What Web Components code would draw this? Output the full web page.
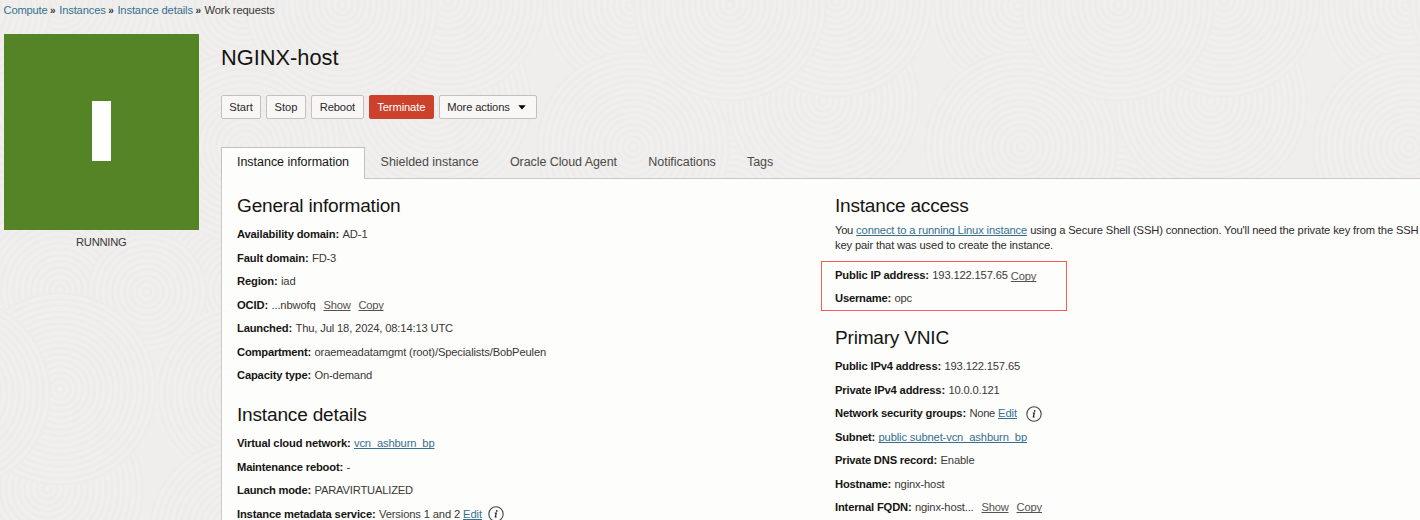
<!DOCTYPE html>
<html lang="en">
<head>
<meta charset="utf-8">
<title>NGINX-host</title>
<style>
html,body{margin:0;height:100%;overflow:hidden}
body{font-family:"Liberation Sans",Arial,sans-serif;font-size:11.2px;color:#3a3836;background:#f1efed}
</style>
</head>
<body>
<oci-page>
  <oci-breadcrumb slot="crumbs">
    <a><x-run w="44">Compute</x-run></a><a><x-run w="46.5">Instances</x-run></a><a><x-run w="75.5">Instance details</x-run></a><span><x-run w="70">Work requests</x-run></span>
  </oci-breadcrumb>
  <oci-status slot="status"><x-run w="50.5">RUNNING</x-run></oci-status>
  <oci-title slot="main"><x-run w="117.5">NGINX-host</x-run></oci-title>
  <oci-toolbar slot="main">
    <oci-button style="width:40px"><x-run w="23.5">Start</x-run></oci-button>
    <oci-button style="width:39.5px"><x-run w="23">Stop</x-run></oci-button>
    <oci-button style="width:53px"><x-run w="35">Reboot</x-run></oci-button>
    <oci-button danger style="width:64.5px"><x-run w="48">Terminate</x-run></oci-button>
    <oci-button menu style="width:98.5px"><x-run w="62.5">More actions</x-run></oci-button>
  </oci-toolbar>
  <oci-tabs slot="main">
    <oci-tab active><x-run w="112">Instance information</x-run></oci-tab>
    <oci-tab><x-run w="98">Shielded instance</x-run></oci-tab>
    <oci-tab><x-run w="107.8">Oracle Cloud Agent</x-run></oci-tab>
    <oci-tab><x-run w="67.5">Notifications</x-run></oci-tab>
    <oci-tab><x-run w="26">Tags</x-run></oci-tab>
  </oci-tabs>
  <oci-panel slot="main">
    <oci-section slot="left">
      <x-run slot="title" w="163.5">General information</x-run>
      <oci-field label="Availability domain:" lw="102"><x-run w="25">AD-1</x-run></oci-field>
      <oci-field label="Fault domain:" lw="71.5"><x-run w="24">FD-3</x-run></oci-field>
      <oci-field label="Region:" lw="40.5"><x-run w="14.5">iad</x-run></oci-field>
      <oci-field label="OCID:" lw="31"><x-run w="44">...nbwofq</x-run><oci-link muted gap><x-run w="27">Show</x-run></oci-link><oci-link muted gap><x-run w="25">Copy</x-run></oci-link></oci-field>
      <oci-field label="Launched:" lw="55"><x-run w="157.5">Thu, Jul 18, 2024, 08:14:13 UTC</x-run></oci-field>
      <oci-field label="Compartment:" lw="74"><x-run w="231.5">oraemeadatamgmt (root)/Specialists/BobPeulen</x-run></oci-field>
      <oci-field label="Capacity type:" lw="74"><x-run w="57.5">On-demand</x-run></oci-field>
    </oci-section>
    <oci-section slot="left">
      <x-run slot="title" w="129.5">Instance details</x-run>
      <oci-field label="Virtual cloud network:" lw="113.5"><oci-link><x-run w="80.5">vcn_ashburn_bp</x-run></oci-link></oci-field>
      <oci-field label="Maintenance reboot:" lw="106"><x-run w="4">-</x-run></oci-field>
      <oci-field label="Launch mode:" lw="74"><x-run w="98.5">PARAVIRTUALIZED</x-run></oci-field>
      <oci-field label="Instance metadata service:" lw="138.5"><x-run w="81">Versions 1 and 2</x-run><oci-link near><x-run w="19">Edit</x-run></oci-link><oci-info></oci-info></oci-field>
    </oci-section>
    <oci-section slot="right">
      <x-run slot="title" w="133.5">Instance access</x-run>
      <oci-note><x-run w="18">You</x-run> <oci-link><x-run w="171">connect to a running Linux instance</x-run></oci-link> <x-run w="388.5">using a Secure Shell (SSH) connection. You'll need the private key from the SSH</x-run><br><x-run w="218">key pair that was used to create the instance.</x-run></oci-note>
      <oci-highlight>
        <oci-field label="Public IP address:" lw="94"><x-run w="75.5">193.122.157.65</x-run><oci-link muted near low><x-run w="25.5">Copy</x-run></oci-link></oci-field>
        <oci-field label="Username:" lw="56"><x-run w="17.5">opc</x-run></oci-field>
      </oci-highlight>
    </oci-section>
    <oci-section slot="right">
      <x-run slot="title" w="114">Primary VNIC</x-run>
      <oci-field label="Public IPv4 address:" lw="106"><x-run w="75.5">193.122.157.65</x-run></oci-field>
      <oci-field label="Private IPv4 address:" lw="110"><x-run w="51">10.0.0.121</x-run></oci-field>
      <oci-field label="Network security groups:" lw="131"><x-run w="25.5">None</x-run><oci-link near><x-run w="19">Edit</x-run></oci-link><oci-info style="margin-left:9px"></oci-info></oci-field>
      <oci-field label="Subnet:" lw="40"><oci-link><x-run w="148.5">public subnet-vcn_ashburn_bp</x-run></oci-link></oci-field>
      <oci-field label="Private DNS record:" lw="102"><x-run w="34">Enable</x-run></oci-field>
      <oci-field label="Hostname:" lw="56"><x-run w="50">nginx-host</x-run></oci-field>
      <oci-field label="Internal FQDN:" lw="76.5"><x-run w="58.5">nginx-host...</x-run><oci-link muted gap><x-run w="27">Show</x-run></oci-link><oci-link muted gap><x-run w="25.5">Copy</x-run></oci-link></oci-field>
    </oci-section>
  </oci-panel>
</oci-page>
<script>
const define=(name,html,setup)=>{
  const t=document.createElement('template');t.innerHTML=html;
  customElements.define(name,class extends HTMLElement{
    constructor(){super();this.attachShadow({mode:'open'}).append(t.content.cloneNode(true));}
    connectedCallback(){if(setup)setup(this,this.shadowRoot);}
  });
};

define('oci-texture',`<style>:host{position:absolute;inset:0;z-index:-1}svg{display:block;width:100%;height:100%}</style><svg></svg>`,(el,root)=>{
  const P=388;
  /* centre x, centre y, radius; later discs overlap earlier ones */
  const discs=[[342,200,80],[242,290,90],[60,290,97],[147,292,60],[242,6,88],[245,147,97],[47,101,98],[60,1,97],[342,5,97]];
  let defs='',shapes='';
  discs.forEach(([x,y,r],i)=>{
    for(const dx of[-P,0,P])for(const dy of[-P,0,P]){
      const cx=x+dx,cy=y+dy;
      if(cx+r<0||cx-r>P||cy+r<0||cy-r>P)continue;
      const id='g'+i+'_'+(dx/P+1)+(dy/P+1);
      defs+=`<radialGradient id="${id}" gradientUnits="userSpaceOnUse" cx="${cx}" cy="${cy}" r="6.1" spreadMethod="repeat"><stop offset="0" stop-color="#f0efed"/><stop offset=".35" stop-color="#f0efed"/><stop offset=".7" stop-color="#ecebe9"/><stop offset="1" stop-color="#f0efed"/></radialGradient>`;
      shapes+=`<circle cx="${cx}" cy="${cy}" r="${r}" fill="url(#${id})"/>`;
    }
  });
  root.querySelector('svg').innerHTML=`<defs>${defs}<pattern id="tile" width="${P}" height="${P}" patternUnits="userSpaceOnUse"><rect width="${P}" height="${P}" fill="#efeeec"/>${shapes}</pattern></defs><rect width="100%" height="100%" fill="url(#tile)"/>`;
});

define('oci-page',`<style>
:host{display:grid;grid-template:22px 498px/221px 1fr;height:520px;overflow:hidden;position:relative;z-index:0}
header{grid-column:1/3}
main{display:flex;flex-direction:column;min-width:0;height:498px}
</style><oci-texture></oci-texture><header><slot name="crumbs"></slot></header><aside><slot name="status"></slot></aside><main><slot name="main"></slot></main>`);

define('oci-breadcrumb',`<style>
:host{display:flex;align-items:center;height:20px;padding-left:3.5px}
::slotted(a){color:#36708f}
::slotted(:not(:last-child))::after{content:"»";color:#333;font-weight:bold;font-size:10px;display:inline-block;width:11.7px;text-indent:2.5px}
</style><slot></slot>`);

define('oci-status',`<style>
:host{display:block;padding:12px 0 0 3.5px;width:195.5px;text-align:center}
div{display:grid;place-items:center;height:196px;background:#558427;margin-bottom:6px}
i{width:19px;height:60px;margin-top:-2px;background:#fff}
</style><div><i></i></div><slot></slot>`);

define('oci-title',`<style>:host{display:flex;align-items:center;height:73px;font-size:21.8px;color:#161513}::slotted(*){margin-top:-2px}</style><slot></slot>`);

define('oci-toolbar',`<style>:host{display:flex;gap:5.2px;height:24px}</style><slot></slot>`);

define('oci-button',`<style>
:host{display:flex;box-sizing:border-box;align-items:center;justify-content:center;height:24px;border:1px solid #c4c1bd;border-radius:2px;background:#f8f7f6;color:#2a2826}
:host([danger]){background:#cc412b;border-color:#cc412b;color:#fff}
svg{display:none;margin:0 3px 0 8px}
:host([menu]) svg{display:block}
</style><slot></slot><svg width="8" height="5"><path d="M.3.3h7.4L4 4.5z" fill="#000"/></svg>`);

define('oci-tabs',`<style>:host{display:flex;height:32px;margin-top:28px;position:relative;z-index:1}</style><slot></slot>`);
define('oci-tab',`<style>
:host{display:block;padding:7.5px 16px 0 15.3px;line-height:15px;font-size:12.5px;color:#4c4a48}
:host([active]){box-sizing:border-box;width:144.3px;padding:7px 15px 0;border:1px solid #c4c1bd;border-bottom:0;background:#fdfdfc;color:#161513}
</style><slot></slot>`);

define('oci-panel',`<style>
:host{display:grid;grid-template-columns:598px 1fr;flex:1;margin-top:-1px;border:solid #cbc8c5;border-width:1px 0 0 1px;padding:12px 0 0 15px;background:#fdfdfc;min-height:0;overflow:hidden}
</style><div><slot name="left"></slot></div><div><slot name="right"></slot></div>`);

define('oci-section',`<style>
:host{display:block;margin-bottom:12.6px}
:host([slot=right]){margin-bottom:11.6px}
h2{margin:0;height:31.6px;line-height:30px;font-size:19.1px;font-weight:normal;color:#161513}
</style><h2><slot name="title"></slot></h2><slot></slot>`);

define('oci-field',`<style>
:host{display:flex;align-items:center;height:23.5px;white-space:nowrap}
b{color:#161513;margin-right:3.5px}
</style><b></b><slot></slot>`,(el,root)=>{
  const r=document.createElement('x-run');
  r.setAttribute('w',el.getAttribute('lw'));r.textContent=el.getAttribute('label');
  root.querySelector('b').replaceChildren(r);
});

define('oci-link',`<style>
:host{color:#36708f;text-decoration:underline;text-underline-offset:1px;text-decoration-skip-ink:none}
:host([muted]){color:#55524f}
:host([gap]){margin-left:8px}
:host([near]){margin-left:3px}
:host([low]){margin-top:2px}
</style><slot></slot>`);

define('oci-info',`<style>:host{display:block;height:16px;margin:1px 0 0 6px}svg{display:block}</style>
<svg width="16" height="16" fill="none"><circle cx="8" cy="8" r="7.2" stroke="#444" stroke-width="1.1"/><circle cx="8.7" cy="4.9" r=".85" fill="#222"/><path d="M6.8 7.1h1.5L7.3 11h1.4" stroke="#222" stroke-width="1.2"/></svg>`);

define('oci-note',`<style>:host{display:block;line-height:15.5px;height:31px;white-space:nowrap;color:#2d2b29}</style><slot></slot>`);

define('oci-highlight',`<style>:host{display:block;box-sizing:border-box;width:246px;height:50.4px;margin:7.4px 0 .2px -14px;padding:1.1px 0 0 13px;border:1px solid #ff5a5a}</style><slot></slot>`);

/* A run of text tracked to a given width */
customElements.define('x-run',class extends HTMLElement{
  constructor(){
    super();this.attachShadow({mode:'open'}).innerHTML='<style>:host{white-space:pre}</style><slot></slot>';
  }
  connectedCallback(){
    const s=getComputedStyle(this),c=document.createElement('canvas').getContext('2d');
    c.font=`${s.fontWeight} ${s.fontSize} ${s.fontFamily}`;
    const t=this.textContent;
    this.style.letterSpacing=((this.getAttribute('w')-c.measureText(t).width)/t.length).toFixed(3)+'px';
  }
});
</script>
</body>
</html>
